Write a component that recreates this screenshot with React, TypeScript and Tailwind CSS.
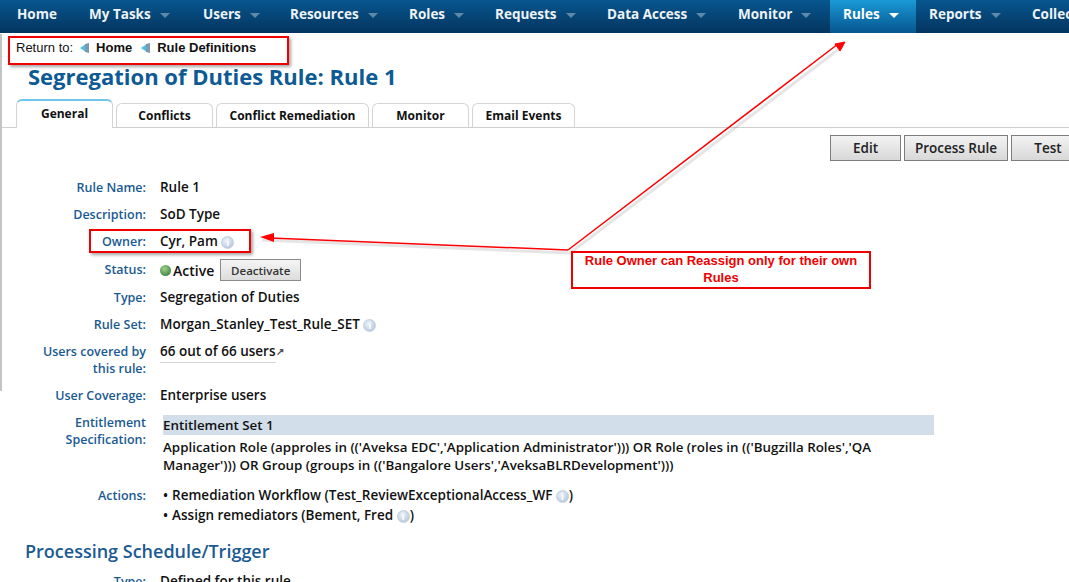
import type { ReactNode } from "react";

const navItems = [
  { label: "Home", caret: false, width: "w-[72px]" },
  { label: "My Tasks", caret: true, width: "w-[114px]" },
  { label: "Users", caret: true, width: "w-[87px]" },
  { label: "Resources", caret: true, width: "w-[119px]" },
  { label: "Roles", caret: true, width: "w-[86px]" },
  { label: "Requests", caret: true, width: "w-[112px]" },
  { label: "Data Access", caret: true, width: "w-[131px]" },
  { label: "Monitor", caret: true, width: "w-[105px]" },
  { label: "Rules", caret: true, width: "w-[86px]", active: true },
  { label: "Reports", caret: true, width: "w-[103px]" },
  { label: "Collections", caret: true, width: "w-[120px]" },
];

const tabs = [
  { label: "Conflicts", width: "w-[97px]" },
  { label: "Conflict Remediation", width: "w-[153px]" },
  { label: "Monitor", width: "w-[97px]" },
  { label: "Email Events", width: "w-[103px]" },
];

function InfoIcon() {
  return (
    <span className="inline-block w-[13px] h-[13px] rounded-full bg-[radial-gradient(circle_at_40%_35%,#eef3f8,#a9bed8)] border border-[#c3d0e0] text-[#fff] text-[9px] leading-[11px] text-center align-[-1px] font-bold relative top-[-1px]">
      i
    </span>
  );
}

function BackArrow() {
  return (
    <svg width="9" height="10" viewBox="0 0 9 10" className="shrink-0">
      <path d="M0 5 L5 1.5 L5 8.5 Z" fill="#4fc0ec" />
      <path d="M5 1 L9 0 L9 10 L5 9 Z" fill="#7f9aa6" />
    </svg>
  );
}

function Row({ label, children, className }: { label: ReactNode; children: ReactNode; className: string }) {
  return (
    <div className={`flex ${className}`}>
      <div className="w-[146px] shrink-0 text-right text-[#1a5a92] font-semibold text-[12.5px] leading-[17px]">{label}</div>
      <div className="ml-[14px] flex-1 text-[#111] font-semibold text-[13.5px] leading-[17px] whitespace-nowrap">{children}</div>
    </div>
  );
}

function ActionButton({ label, width, ml }: { label: string; width: string; ml: string }) {
  return (
    <button className={`${width} ${ml} shrink-0 h-[26px] border border-[#7d7d7d] bg-gradient-to-b from-[#f3f3f3] to-[#d8d8d8] text-[#222] text-[13.5px] font-semibold`}>
      {label}
    </button>
  );
}

export default function App() {
  return (
    <div className="relative w-[1069px] h-[582px] overflow-hidden bg-white font-['Open_Sans',sans-serif]">
      {/* top nav */}
      <div className="flex h-[33px] pl-[4px] bg-gradient-to-b from-[#07568f] to-[#04355f] overflow-hidden">
        {navItems.map((item) => (
          <div
            key={item.label}
            className={`${item.width} shrink-0 flex items-center pl-[13px] pb-[4px] text-[13.5px] font-bold whitespace-nowrap text-[#eef3f7] ${item.active ? "bg-gradient-to-b from-[#1a9ad6] to-[#07568f] text-white" : ""}`}
          >
            {item.label}
            {item.caret && (
              <span className={`ml-[9px] mt-[1px] w-0 h-0 border-x-[5px] border-x-transparent border-t-[5px] ${item.active ? "border-t-white" : "border-t-[#5e8aa9]"}`} />
            )}
          </div>
        ))}
      </div>

      <div className="border-l-2 border-[#c4c4c4] h-[357px]">
        {/* breadcrumb */}
        <div className="flex items-center h-[28px] pl-[14px] font-['Liberation_Sans',sans-serif] text-[13px] text-[#111] mt-[1px]">
          <span>Return to:</span>
          <span className="ml-[7px] flex"><BackArrow /></span>
          <span className="ml-[7px] font-bold">Home</span>
          <span className="ml-[9px] flex"><BackArrow /></span>
          <span className="ml-[7px] font-bold">Rule Definitions</span>
        </div>

        <h1 className="ml-[26px] mt-[-1px] text-[22px] leading-[30px] font-bold text-[#0d5a94] whitespace-nowrap">
          Segregation of Duties Rule: Rule 1
        </h1>

        {/* tabs */}
        <div className="flex items-end h-[30px] mt-[7px] pl-[14px] border-b border-[#cfcfcf] gap-[3px]">
          <div className="w-[97px] h-[29px] mb-[-1px] bg-white rounded-t-[6px] border-x border-[#d4d4d4] border-t-2 border-t-[#72c4ea] text-center text-[12px] leading-[25px] font-bold text-[#111]">
            General
          </div>
          {tabs.map((tab) => (
            <div
              key={tab.label}
              className={`${tab.width} h-[24px] rounded-t-[6px] border-x border-t border-[#d4d4d4] text-center text-[12px] leading-[24px] font-bold text-[#111] whitespace-nowrap`}
            >
              {tab.label}
            </div>
          ))}
        </div>

        {/* action buttons */}
        <div className="flex justify-start pl-[828px] mt-[7px] overflow-hidden">
          <ActionButton label="Edit" width="w-[71px]" ml="ml-0" />
          <ActionButton label="Process Rule" width="w-[104px]" ml="ml-[3px]" />
          <ActionButton label="Test" width="w-[74px]" ml="ml-[3px]" />
        </div>

        {/* details */}
        <div className="mt-[18px] ml-[-2px]">
          <Row label="Rule Name:" className="h-[27px]">Rule 1</Row>
          <Row label="Description:" className="h-[27px]">SoD Type</Row>
          <Row label="Owner:" className="h-[28px]">
            Cyr, Pam <InfoIcon />
          </Row>
          <Row label="Status:" className="h-[28px]">
            <div className="flex items-center mt-[-2px]">
              <span className="w-[11px] h-[11px] rounded-full bg-[radial-gradient(circle_at_40%_35%,#9fd08a,#23702a)]" />
              <span className="ml-[2px] text-[14px]">Active</span>
              <button className="ml-[6px] w-[81px] h-[22px] border border-[#8a8a8a] bg-gradient-to-b from-[#f5f5f5] to-[#dcdcdc] text-[11.5px] font-semibold text-[#333]">
                Deactivate
              </button>
            </div>
          </Row>
          <Row label="Type:" className="h-[27px]">Segregation of Duties</Row>
          <Row label="Rule Set:" className="h-[27px]">
            Morgan_Stanley_Test_Rule_SET <InfoIcon />
          </Row>
          <Row label={<>Users covered by<br />this rule:</>} className="h-[44px]">
            <span className="border-b border-[#d8d8d8] pb-[2px]">66 out of 66 users</span>
            <span className="text-[10px] align-top text-[#555]">↗</span>
          </Row>
        </div>
      </div>

      <div className="mt-[-4px]">
        <Row label="User Coverage:" className="h-[27px]">Enterprise users</Row>
        <Row label={<>Entitlement<br />Specification:</>} className="h-[73px]">
          <div className="w-[771px] ml-[3px] mt-[1px] whitespace-normal text-[13.35px]">
            <div className="h-[20px] bg-[#d3deeb] leading-[20px]">Entitlement Set 1</div>
            <div className="mt-[3px] leading-[18px]">
              Application Role (approles in (('Aveksa EDC','Application Administrator'))) OR Role (roles in (('Bugzilla Roles','QA Manager'))) OR Group (groups in (('Bangalore Users','AveksaBLRDevelopment')))
            </div>
          </div>
        </Row>
        <Row label="Actions:" className="h-[43px]">
          <ul className="ml-[3px]">
            <li className="h-[20px] flex items-baseline gap-[4px]"><span>•</span><span>Remediation Workflow (Test_ReviewExceptionalAccess_WF <InfoIcon />)</span></li>
            <li className="flex items-baseline gap-[4px]"><span>•</span><span>Assign remediators (Bement, Fred <InfoIcon />)</span></li>
          </ul>
        </Row>
        <h2 className="ml-[25px] mt-[9px] text-[18px] leading-[24px] font-semibold text-[#1a5a92]">Processing Schedule/Trigger</h2>
        <Row label="Type:" className="mt-[10px] h-[20px]">Defined for this rule</Row>
      </div>

      {/* annotations on top of the page */}
      <div className="absolute left-[8px] top-[36px] w-[281px] h-[29px] border-2 border-[#f00000] shadow-[2px_2px_3px_rgba(0,0,0,0.35)]" />
      <div className="absolute left-[89px] top-[229px] w-[162px] h-[24px] border-2 border-[#f00000] shadow-[2px_2px_3px_rgba(0,0,0,0.35)]" />
      <svg className="absolute left-0 top-0" width="1069" height="582" viewBox="0 0 1069 582">
        <path d="M262 240 L570 253 L843 46" fill="none" stroke="#000" strokeWidth="3" opacity="0.1" />
        <path d="M568 250 L838 44" stroke="#f00" strokeWidth="1.5" fill="none" />
        <path d="M568 250 L270 238" stroke="#f00" strokeWidth="1.5" fill="none" />
        <path d="M845 42 L835 44 L840 51 Z" fill="#f00" stroke="#f00" />
        <path d="M260 237 L274 233 L274 242 Z" fill="#f00" />
      </svg>
      <div className="absolute left-[571px] top-[251px] w-[300px] h-[38px] border-2 border-[#f00000] bg-white flex items-center justify-center text-center pb-[2px] font-['Liberation_Sans',sans-serif] text-[13px] leading-[17px] font-bold text-[#f00000]">
        Rule Owner can Reassign only for their own<br />Rules
      </div>
    </div>
  );
}
